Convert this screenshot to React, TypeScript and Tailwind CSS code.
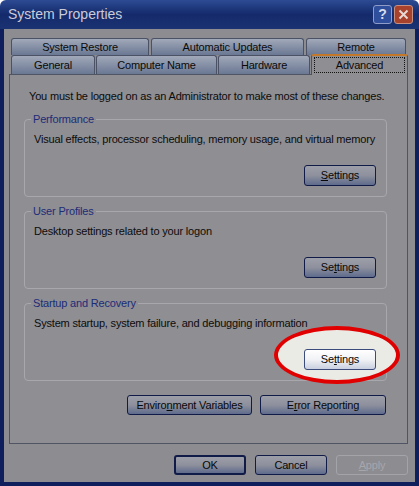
const sans = "font-['Liberation_Sans',Arial,sans-serif]";

function Btn({
  children,
  className = "",
}: {
  children: React.ReactNode;
  className?: string;
}) {
  return (
    <button
      className={`flex h-[20px] items-center justify-center rounded-[3px] border border-[#111b48] bg-linear-to-b from-[#9c9ea8] via-[#8e919d] to-[#5f6b8c] text-[11px] tracking-[-0.18px] text-[#080808] ${className}`}
    >
      {children}
    </button>
  );
}

function Group({
  title,
  text,
  button,
  className = "",
}: {
  title: string;
  text: string;
  button: React.ReactNode;
  className?: string;
}) {
  return (
    <fieldset
      className={`ml-[14px] w-[363px] rounded-[4px] border border-[#a7a7ad] pr-[10px] pb-[10px] pl-[9px] ${className}`}
    >
      <legend className="ml-[-3px] px-[2px] text-[11px] leading-[14px] tracking-[-0.18px] text-[#1b2c78]">
        {title}
      </legend>
      <p className="pt-[6px] text-[11px] leading-[14px] tracking-[-0.18px] whitespace-nowrap text-[#0c0c0c]">
        {text}
      </p>
      <div className="mt-[19px] flex justify-end">{button}</div>
    </fieldset>
  );
}

function Tab({ label, w }: { label: string; w: string }) {
  return (
    <div
      className={`flex items-center justify-center rounded-t-[3px] border border-b-0 border-[#4b5265] bg-linear-to-b from-[#a1a9b9] to-[#6b7893] text-[11px] tracking-[-0.18px] text-[#0a0a0a] ${w}`}
    >
      {label}
    </div>
  );
}

export default function App() {
  return (
    <div className={`flex h-[486px] w-[419px] flex-col ${sans}`}>
      <div className="flex h-[29px] items-center rounded-t-[6px] bg-linear-to-b from-[#2d4b93] via-[#142a6b] to-[#1b3373] pr-[6px] pl-[8px]">
        <span className="flex-1 text-[14px] text-[#c9cbd8]">System Properties</span>
        <div className="flex gap-[2px]">
          <div className="flex h-[19px] w-[19px] items-center justify-center rounded-[3px] border border-[#8e9cc8] bg-[#2f4f9c] text-[14px] font-bold text-[#d8dcea]">
            ?
          </div>
          <div className="flex h-[19px] w-[19px] items-center justify-center rounded-[3px] border border-[#c79080] bg-[#a9422c]">
            <svg width="11" height="11" viewBox="0 0 11 11">
              <path d="M1.5 1.5L9.5 9.5M9.5 1.5L1.5 9.5" stroke="#e8d8d4" strokeWidth="2" />
            </svg>
          </div>
        </div>
      </div>

      <div className="flex flex-1 flex-col border-x-[4px] border-b-[4px] border-[#0f1e5c] bg-[#8d8c91] pt-[9px]">
        <div className="ml-[7px] flex h-[17px] gap-[2px]">
          <Tab label="System Restore" w="w-[138px]" />
          <Tab label="Automatic Updates" w="w-[153px]" />
          <Tab label="Remote" w="w-[100px]" />
        </div>
        <div className="ml-[7px] flex h-[19px] items-end gap-[1px]">
          <Tab label="General" w="w-[84px] h-[19px]" />
          <Tab label="Computer Name" w="w-[121px] h-[19px]" />
          <Tab label="Hardware" w="w-[92px] h-[19px]" />
          <div className="relative z-10 mb-[-1px] flex h-[21px] w-[97px] items-start justify-center rounded-t-[3px] border-x border-t-2 border-x-[#4b5265] border-t-[#c4782a] bg-[#8f8e93] px-[2px] pt-[1px]">
            <span className="w-full border border-dotted border-[#111] text-center text-[11px] leading-[14px] tracking-[-0.18px] text-[#0a0a0a]">
              Advanced
            </span>
          </div>
        </div>

        <div className="relative ml-[5px] h-[370px] w-[399px] border border-[#4f5562] bg-[#8f8e93]">
          <p className="pt-[14px] pl-[19px] text-[11px] leading-[14px] tracking-[-0.18px] whitespace-nowrap text-[#0c0c0c]">
            You must be logged on as an Administrator to make most of these changes.
          </p>
          <Group
            className="mt-[9px]"
            title="Performance"
            text="Visual effects, processor scheduling, memory usage, and virtual memory"
            button={
              <Btn className="h-[21px] w-[72px]">
                <u>S</u>ettings
              </Btn>
            }
          />
          <Group
            className="mt-[7px]"
            title="User Profiles"
            text="Desktop settings related to your logon"
            button={
              <Btn className="h-[21px] w-[72px]">
                Se<u>t</u>tings
              </Btn>
            }
          />
          <Group
            className="mt-[7px]"
            title="Startup and Recovery"
            text="System startup, system failure, and debugging information"
            button={
              <button className="relative z-20 flex h-[21px] w-[72px] items-center justify-center rounded-[3px] border border-[#3b4b7c] bg-linear-to-b from-[#ffffff] via-[#f1f2f5] to-[#c9d0e0] text-[11px] tracking-[-0.18px] text-[#080808]">
                Se<u>t</u>tings
              </button>
            }
          />
          <div className="mt-[14px] mr-[21px] flex justify-end gap-[8px]">
            <Btn className="w-[125px]">
              Enviro<u>n</u>ment Variables
            </Btn>
            <Btn className="w-[126px]">
              E<u>r</u>ror Reporting
            </Btn>
          </div>

          <div className="absolute top-[251px] left-[264px] z-[5] h-[58px] w-[126px] rounded-[50%] border-[4px] border-[#e10000] bg-[#ebebe6]" />
        </div>

        <div className="mt-[11px] ml-[170px] flex gap-[9px]">
          <Btn className="w-[72px] border-2 border-[#0f1c52]">OK</Btn>
          <Btn className="w-[72px]">Cancel</Btn>
          <button className="flex h-[20px] w-[72px] items-center justify-center rounded-[3px] border border-[#a3a3aa] text-[11px] tracking-[-0.18px] text-[#a6a6ad]">
            <u>A</u>pply
          </button>
        </div>
      </div>
    </div>
  );
}
